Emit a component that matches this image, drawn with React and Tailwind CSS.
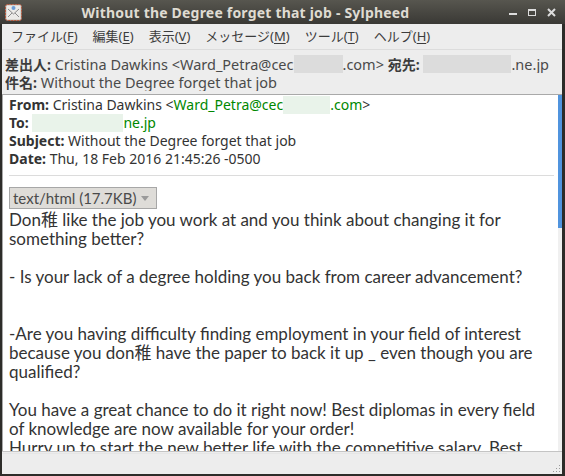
import { useState } from "react";

const ui = { fontFamily: '"Noto Sans", "Noto Sans CJK JP", sans-serif' };
const body = { fontFamily: 'Lato, "Noto Sans CJK JP", sans-serif' };

const menus = [
  ["ファイル", "F"],
  ["編集", "E"],
  ["表示", "V"],
  ["メッセージ", "M"],
  ["ツール", "T"],
  ["ヘルプ", "H"],
];

const AppIcon = () => (
  <svg width="17" height="17" viewBox="0 0 17 17">
    <rect x="0.5" y="0.5" width="16" height="16" rx="2" fill="#d9d6d0" stroke="#b4573c" strokeDasharray="2 1" />
    <rect x="2" y="2" width="13" height="13" fill="#ecebe8" />
    <path d="M3 5 L8.5 10 L14 5 M3 13 L7 9 M14 13 L10 9" stroke="#8c8c8c" strokeWidth="1" fill="none" />
    <circle cx="8.5" cy="4" r="2" fill="#6d9ed8" />
  </svg>
);

const Blur = ({ w, tone }) => (
  <span
    className={`inline-block h-[18px] align-top ${tone === "green" ? "bg-[#e9f3ea]" : "bg-[#dcdcdc]"}`}
    style={{ width: w }}
  />
);

const paragraphs = [
  "Don稚 like the job you work at and you think about changing it for something better?",
  "",
  "- Is your lack of a degree holding you back from career advancement?",
  "",
  "",
  "-Are you having difficulty finding employment in your field of interest because you don稚 have the paper to back it up _ even though you are qualified?",
  "",
  "You have a great chance to do it right now! Best diplomas in every field of knowledge are now available for your order!",
  "Hurry up to start the new better life with the competitive salary. Best",
];

const Row = ({ children }) => (
  <div className="h-[18px] leading-[18px] whitespace-nowrap overflow-hidden">{children}</div>
);

export default function App() {
  const [open] = useState(false);
  return (
    <div className="w-[565px] h-[476px] bg-[#2d2c29] flex flex-col overflow-hidden" style={ui}>
      {/* title bar */}
      <div className="h-[24px] shrink-0 flex items-center bg-gradient-to-b from-[#57564f] to-[#3a3935] px-[5px]">
        <AppIcon />
        <div className="flex-1 text-center text-[#dfdbd2] font-bold text-[14px] tracking-[0.2px] pr-[40px]">
          Without the Degree forget that job - Sylpheed
        </div>
        <div className="flex items-center gap-[11px] text-[#dcdcdc] pr-[4px]">
          <span className="w-[8px] h-[2px] bg-[#dcdcdc] mt-[4px]" />
          <span className="w-[8px] h-[7px] border border-[#dcdcdc] border-t-2" />
          <svg width="9" height="9" viewBox="0 0 9 9"><path d="M1 1 L8 8 M8 1 L1 8" stroke="#dcdcdc" strokeWidth="2" /></svg>
        </div>
      </div>

      <div className="flex-1 min-h-0 flex flex-col bg-[#ededed] ml-[2px] mr-[3px] mb-[2px]">
        {/* menu bar */}
        <div className="h-[26px] shrink-0 flex items-center gap-[15px] px-[9px] text-[13px] text-[#3c3c3c] border-b border-[#dcdcdc]">
          {menus.map(([t, k]) => (
            <span key={k}>
              {t}(<span className="underline underline-offset-2">{k}</span>)
            </span>
          ))}
        </div>

        {/* summary */}
        <div className="h-[44px] shrink-0 px-[3px] pt-[5px] text-[14.5px] text-[#4a4a4a]">
          <Row>
            <b className="text-[#3c3c3c] text-[14px]">差出人:</b> Cristina Dawkins &lt;Ward_Petra@cec<Blur w={49} />.com&gt; <b className="text-[#3c3c3c] text-[14px]">宛先:</b> <Blur w={88} />.ne.jp
          </Row>
          <Row>
            <b className="text-[#3c3c3c] text-[14px]">件名:</b> Without the Degree forget that job
          </Row>
        </div>

        {/* message view */}
        <div className="flex-1 flex min-h-0 bg-white border-t border-l border-[#a9a9a9] overflow-hidden">
          <div className="flex-1 min-w-0 pl-[6px] pr-[4px] pt-[1px] overflow-hidden">
            <div className="text-[14px] text-[#333]">
              <Row>
                <b>From:</b> Cristina Dawkins &lt;<span className="text-[#008800]">Ward_Petra@cec<Blur w={47} tone="green" />.com</span>&gt;
              </Row>
              <Row>
                <b>To:</b> <Blur w={91} tone="green" /><span className="text-[#008800]">ne.jp</span>
              </Row>
              <Row>
                <b>Subject:</b> Without the Degree forget that job
              </Row>
              <Row>
                <b>Date:</b> Thu, 18 Feb 2016 21:45:26 -0500
              </Row>
            </div>
            <div className="h-px bg-[#dcdcdc] mt-[7px] mb-[11px]" />
            <button className="h-[22px] w-[148px] px-[3px] flex items-center justify-between bg-[#dedcd8] border border-[#a7a7a7] text-[15px] text-[#4a4a4a] pr-[7px]" style={body}>
              text/html (17.7KB)
              <svg width="8" height="5" viewBox="0 0 8 5"><path d="M0 0 L8 0 L4 5 Z" fill="#9a9a9a" /></svg>
            </button>
            <div className="text-[17px] leading-[19px] text-[#333] pr-[10px] mt-[1px]" style={body}>
              {paragraphs.map((p, i) => (
                <div key={i} className={p ? "" : "h-[19px]"}>{p}</div>
              ))}
            </div>
          </div>
          <div className="w-[4px] flex flex-col">
            <div className="h-[133px] bg-[#5094de]" />
            <div className="flex-1 bg-[#f0f0f0]" />
          </div>
        </div>

        {/* status bar */}
        <div className="h-[23px] shrink-0 border-t border-[#c4c4c4] relative">
          <div className="h-px bg-[#e6e6e6] mt-[1px] w-[505px]" />
          <svg className="absolute right-[1px] bottom-[1px]" width="10" height="10" viewBox="0 0 10 10">
            {[[8, 8], [5, 8], [2, 8], [8, 5], [5, 5], [8, 2]].map(([x, y]) => (
              <rect key={`${x}${y}`} x={x} y={y} width="1" height="1" fill="#9a9a9a" />
            ))}
          </svg>
        </div>
      </div>
    </div>
  );
}
